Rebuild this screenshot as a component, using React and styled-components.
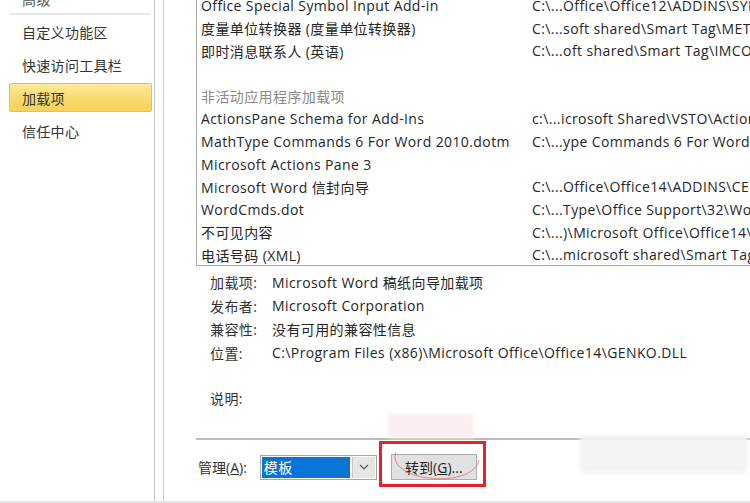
import styled, { createGlobalStyle } from 'styled-components';

const GlobalStyle = createGlobalStyle`
  html, body {
    margin: 0;
    padding: 0;
    background: #fff;
    overflow: hidden;
  }
  body {
    font-family: "Open Sans", "Noto Sans CJK SC", sans-serif;
    font-size: 14px;
    letter-spacing: 0.4px;
    color: #262626;
  }
`;

const Window = styled.div`
  width: 750px;
  height: 503px;
  display: flex;
  border-bottom: 2px solid #e4e4e4;
  box-sizing: border-box;
  overflow: hidden;
`;

const Sidebar = styled.div`
  width: 154px;
  flex-shrink: 0;
  border-right: 1px solid #c9c9c9;
  display: flex;
  flex-direction: column;
`;

const SidebarTop = styled.div`
  height: 13px;
  margin: 0 4px 0 10px;
  border-bottom: 2px solid #e6e6e6;
  overflow: hidden;
  position: relative;
`;

const CutText = styled.span`
  position: absolute;
  left: 12px;
  top: -11px;
  font-size: 14px;
  color: #555;
`;

const NavList = styled.div`
  display: flex;
  flex-direction: column;
`;

const NavItem = styled.div`
  height: 29px;
  margin: 2px 2px 2px 9px;
  padding-left: 12px;
  display: flex;
  align-items: center;
  font-size: 14px;
  letter-spacing: 0.3px;
  color: #333;
  border: 1px solid ${(p) => (p.$active ? '#e6c15a' : 'transparent')};
  border-radius: 2px;
  background: ${(p) =>
    p.$active ? 'linear-gradient(#fde99a, #f9d96a 60%, #f7d35e)' : 'transparent'};
  box-sizing: border-box;
`;

const Gutter = styled.div`
  width: 8px;
  flex-shrink: 0;
  border-right: 1px solid #cfcfcf;
`;

const Main = styled.div`
  flex: 1;
  display: flex;
  flex-direction: column;
  padding-left: 32px;
  min-width: 0;
`;

const ListBox = styled.div`
  margin-top: -6px;
  border: 1px solid #a8a8a8;
  border-top: none;
  border-right: none;
  height: 272px;
  padding-left: 4px;
  box-sizing: border-box;
  overflow: hidden;
`;

const Row = styled.div`
  height: 22.7px;
  display: grid;
  grid-template-columns: 331px 1fr;
  align-items: center;
  white-space: nowrap;
  color: ${(p) => (p.$muted ? '#8a8a8a' : '#262626')};
`;

const Cell = styled.span`
  overflow: hidden;
`;

const Details = styled.div`
  display: grid;
  grid-template-columns: 62px 1fr;
  padding: 4px 0 0 14px;
`;

const DLabel = styled.div`
  height: 23.7px;
  display: flex;
  align-items: center;
  color: #333;
  white-space: nowrap;
`;

const DValue = styled(DLabel)`
  color: #262626;
`;

const Spacer = styled.div`
  height: ${(p) => p.$h}px;
  grid-column: 1 / -1;
`;

const Footer = styled.div`
  margin-top: 29px;
  border-top: 2px solid #babdc1;
  position: relative;
  display: flex;
  align-items: center;
  gap: 10px;
  padding: 14px 0 0 2px;
`;

const ManageLabel = styled.span`
  color: #333;
  letter-spacing: 0;
`;

const Select = styled.div`
  margin-left: 3px;
  width: 117px;
  height: 25px;
  border: 1px solid #a9a9a9;
  box-sizing: border-box;
  display: flex;
  padding: 1px;
  background: #fff;
`;

const SelectValue = styled.div`
  flex: 1;
  background: #0a74d6;
  color: #fff;
  display: flex;
  align-items: center;
  padding-left: 2px;
`;

const SelectArrow = styled.div`
  width: 22px;
  margin-left: 2px;
  background: #e6e6e6;
  border-left: 1px solid #c8c8c8;
  display: flex;
  align-items: center;
  justify-content: center;
`;

const ButtonWrap = styled.div`
  position: relative;
  margin-left: 4px;
`;

const GoButton = styled.div`
  width: 86px;
  height: 26px;
  box-sizing: border-box;
  border: 1px solid #adadad;
  background: #e1e1e1;
  display: flex;
  align-items: center;
  justify-content: center;
  color: #222;
  letter-spacing: 0;
`;

const RedMark = styled.div`
  position: absolute;
  left: -12px;
  right: -9px;
  top: -13px;
  bottom: -7px;
  border: 3px solid #e8202a;
  pointer-events: none;
`;

const Stroke = styled.svg`
  position: absolute;
  left: 0;
  top: -6px;
  pointer-events: none;
`;

const Smudge = styled.div`
  position: absolute;
  left: ${(p) => p.$x}px;
  top: ${(p) => p.$y}px;
  width: ${(p) => p.$w}px;
  height: ${(p) => p.$h}px;
  background: ${(p) => p.$bg};
  filter: blur(2px);
`;

const navItems = ['自定义功能区', '快速访问工具栏', '加载项', '信任中心'];

const rows = [
  ['Office Special Symbol Input Add-in', 'C:\\...Office\\Office12\\ADDINS\\SYMINPUT.DLL'],
  ['度量单位转换器 (度量单位转换器)', 'C:\\...soft shared\\Smart Tag\\METCONV.DLL'],
  ['即时消息联系人 (英语)', 'C:\\...oft shared\\Smart Tag\\IMCONTACT.DLL'],
  null,
  ['非活动应用程序加载项', '', true],
  ['ActionsPane Schema for Add-Ins', 'c:\\...icrosoft Shared\\VSTO\\ActionsPane3.xsd'],
  ['MathType Commands 6 For Word 2010.dotm', 'C:\\...ype Commands 6 For Word 2010.dotm'],
  ['Microsoft Actions Pane 3', ''],
  ['Microsoft Word 信封向导', 'C:\\...Office\\Office14\\ADDINS\\CENVELOP.DLL'],
  ['WordCmds.dot', 'C:\\...Type\\Office Support\\32\\WordCmds.dot'],
  ['不可见内容', 'C:\\...)\\Microsoft Office\\Office14\\OFFRHD.DLL'],
  ['电话号码 (XML)', 'C:\\...microsoft shared\\Smart Tag\\MOFL.DLL'],
];

const details = [
  ['加载项:', 'Microsoft Word 稿纸向导加载项'],
  ['发布者:', 'Microsoft Corporation'],
  ['兼容性:', '没有可用的兼容性信息'],
  ['位置:', 'C:\\Program Files (x86)\\Microsoft Office\\Office14\\GENKO.DLL'],
];

const App = () => {
  return (
    <>
      <GlobalStyle />
      <Window>
        <Sidebar>
          <SidebarTop>
            <CutText>高级</CutText>
          </SidebarTop>
          <NavList>
            {navItems.map((item) => (
              <NavItem key={item} $active={item === '加载项'}>
                {item}
              </NavItem>
            ))}
          </NavList>
        </Sidebar>
        <Gutter />
        <Main>
          <ListBox>
            {rows.map((r, i) =>
              r ? (
                <Row key={i} $muted={r[2]}>
                  <Cell>{r[0]}</Cell>
                  <Cell>{r[1]}</Cell>
                </Row>
              ) : (
                <Row key={i} />
              )
            )}
          </ListBox>
          <Details>
            {details.map(([label, value]) => [
              <DLabel key={label}>{label}</DLabel>,
              <DValue key={label + 'v'}>{value}</DValue>,
            ])}
            <Spacer $h={21} />
            <DLabel>说明:</DLabel>
            <DValue />
          </Details>
          <Footer>
            <Smudge $x={192} $y={-26} $w={86} $h={24} $bg="rgba(250,236,236,0.9)" />
            <Smudge $x={384} $y={-5} $w={168} $h={38} $bg="rgba(241,242,242,0.95)" />
            <ManageLabel>
              管理(<u>A</u>):
            </ManageLabel>
            <Select>
              <SelectValue>模板</SelectValue>
              <SelectArrow>
                <svg width="10" height="6" viewBox="0 0 10 6">
                  <path d="M1 1 L5 5 L9 1" fill="none" stroke="#555" strokeWidth="1.2" />
                </svg>
              </SelectArrow>
            </Select>
            <ButtonWrap>
              <GoButton>
                转到(<u>G</u>)...
              </GoButton>
              <RedMark />
              <Stroke width="90" height="40" viewBox="0 0 90 40">
                <path
                  d="M5 4 C -2 22, 30 34, 60 30 C 75 28, 86 22, 88 12"
                  fill="none"
                  stroke="rgba(230,60,70,0.55)"
                  strokeWidth="1"
                />
              </Stroke>
            </ButtonWrap>
          </Footer>
        </Main>
      </Window>
    </>
  );
};

export default App;
